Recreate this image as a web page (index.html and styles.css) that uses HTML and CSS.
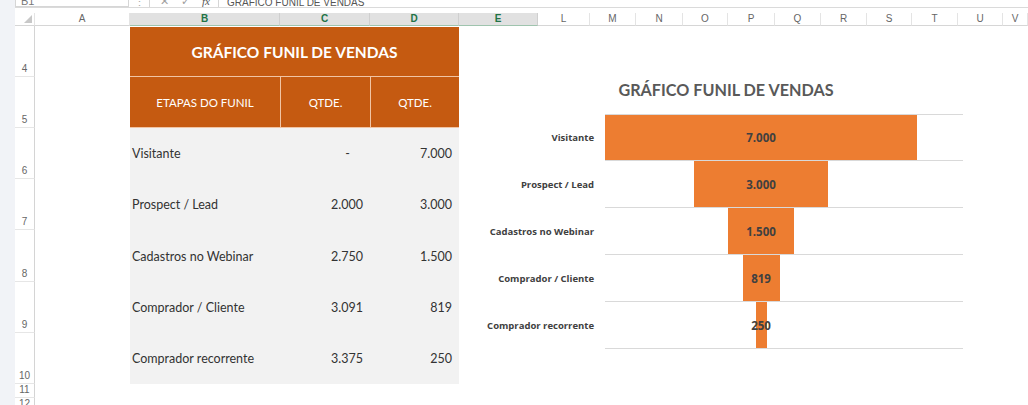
FILE: index.html
```html
<!DOCTYPE html>
<html lang="pt">
<head>
<meta charset="utf-8">
<title>Gráfico Funil de Vendas</title>
<link rel="stylesheet" href="styles.css">
</head>
<body>
<div class="app">
  <div class="strip"></div>
  <div class="main">
    <div class="fbar">
      <div class="namebox"><span>B1</span></div>
      <div class="dots">⋮</div>
      <div class="fbtns"><span>✕</span><span>✓</span><span class="fx">fx</span></div>
      <div class="finput"><span>GRÁFICO FUNIL DE VENDAS</span></div>
    </div>
    <div class="sheet">
      <div class="ch corner r0"><svg width="8" height="8" viewBox="0 0 8 8"><polygon points="8,0 8,8 0,8" fill="#c8c8c8"/></svg></div>
      <div class="ch r0">A</div>
      <div class="ch sel r0">B</div>
      <div class="ch sel r0">C</div>
      <div class="ch sel r0">D</div>
      <div class="ch sel r0">E</div>
      <div class="ch r0">L</div>
      <div class="ch r0">M</div>
      <div class="ch r0">N</div>
      <div class="ch r0">O</div>
      <div class="ch r0">P</div>
      <div class="ch r0">Q</div>
      <div class="ch r0">R</div>
      <div class="ch r0">S</div>
      <div class="ch r0">T</div>
      <div class="ch r0">U</div>
      <div class="ch r0">V</div>

      <div class="rh r4">4</div>
      <div class="rh r5">5</div>
      <div class="rh r6">6</div>
      <div class="rh r7">7</div>
      <div class="rh r8">8</div>
      <div class="rh r9">9</div>
      <div class="rh r10">10</div>
      <div class="rh r11">11</div>
      <div class="rh r12">12</div>

      <div class="title r4">GRÁFICO FUNIL DE VENDAS</div>
      <div class="th cB r5">ETAPAS DO FUNIL</div>
      <div class="th cC r5 bl">QTDE.</div>
      <div class="th cD r5 bl">QTDE.</div>

      <div class="td cB r6">Visitante</div>
      <div class="td cC r6 dash">-</div>
      <div class="td cD r6 num">7.000</div>

      <div class="td cB r7">Prospect / Lead</div>
      <div class="td cC r7 num">2.000</div>
      <div class="td cD r7 num">3.000</div>

      <div class="td cB r8">Cadastros no Webinar</div>
      <div class="td cC r8 num">2.750</div>
      <div class="td cD r8 num">1.500</div>

      <div class="td cB r9">Comprador / Cliente</div>
      <div class="td cC r9 num">3.091</div>
      <div class="td cD r9 num">819</div>

      <div class="td cB r10">Comprador recorrente</div>
      <div class="td cC r10 num">3.375</div>
      <div class="td cD r10 num">250</div>
    </div>
  </div>

  <div class="chart">
    <div class="ctitle">GRÁFICO FUNIL DE VENDAS</div>
    <div class="plot">
      <div class="prow first">
        <div class="plabel">Visitante</div>
        <div class="track"><div class="barzone"><div class="bar" style="width:312px"><span>7.000</span></div></div></div>
      </div>
      <div class="prow">
        <div class="plabel">Prospect / Lead</div>
        <div class="track"><div class="barzone"><div class="bar" style="width:134px"><span>3.000</span></div></div></div>
      </div>
      <div class="prow">
        <div class="plabel">Cadastros no Webinar</div>
        <div class="track"><div class="barzone"><div class="bar" style="width:66px"><span>1.500</span></div></div></div>
      </div>
      <div class="prow">
        <div class="plabel">Comprador / Cliente</div>
        <div class="track"><div class="barzone"><div class="bar" style="width:37px"><span>819</span></div></div></div>
      </div>
      <div class="prow">
        <div class="plabel">Comprador recorrente</div>
        <div class="track"><div class="barzone"><div class="bar" style="width:11px"><span>250</span></div></div></div>
      </div>
    </div>
  </div>
</div>
</body>
</html>
```

FILE: styles.css
```css
* { box-sizing: border-box; }
html, body { margin: 0; padding: 0; background: #fff; }
body { width: 1028px; height: 405px; overflow: hidden; font-family: "Lato", "Liberation Sans", sans-serif; }

.app { position: relative; display: flex; width: 1028px; height: 405px; overflow: hidden; }
.strip { width: 15px; flex: none; background: #f1f3f7; }
.main { flex: 1; display: flex; flex-direction: column; min-width: 0; }

/* formula bar (cut off at top) */
.fbar { flex: none; height: 8px; display: flex; align-items: flex-end; overflow: hidden; border-bottom: 1px solid #dadada; margin-bottom: 5px; font-family: "Liberation Sans", sans-serif; font-size: 11px; color: #777; }
.fbar span { display: block; line-height: 12px; margin-bottom: -2px; }
.namebox { width: 114px; height: 12px; flex: none; padding-left: 5px; border: 1px solid #d6d6d6; border-top: none; background: #fff; }
.dots { width: 20px; flex: none; text-align: center; color: #aaa; line-height: 10px; }
.fbtns { width: 70px; flex: none; display: flex; gap: 12px; padding-left: 10px; color: #a0a0a0; border-left: 1px solid #d6d6d6; border-right: 1px solid #d6d6d6; height: 12px; }
.fbtns .fx { font-style: italic; font-family: "Liberation Serif", serif; color: #555; }
.finput { flex: 1; padding-left: 8px; font-size: 10px; color: #555; }

/* sheet grid */
.sheet {
  flex: none;
  display: grid;
  grid-template-columns: 20px 95px 150px 90px 89px 79px 52px 46px 47px 45px 47px 46px 46px 45px 46px 45px 1fr;
  grid-template-rows: 13px 51px 51px 51px 51px 52px 51px 51px 14px 14px;
  font-family: "Lato", "Liberation Sans", sans-serif;
}
.r0 { grid-row: 1; }
.r4 { grid-row: 2; } .r5 { grid-row: 3; } .r6 { grid-row: 4; } .r7 { grid-row: 5; }
.r8 { grid-row: 6; } .r9 { grid-row: 7; } .r10 { grid-row: 8; } .r11 { grid-row: 9; } .r12 { grid-row: 10; }
.cB { grid-column: 3; } .cC { grid-column: 4; } .cD { grid-column: 5; }

.ch { font-family: "Liberation Sans", sans-serif; font-size: 10px; color: #666; text-align: center; line-height: 12px; background: #fff; border-right: 1px solid #e4e4e4; border-bottom: 1px solid #d6d6d6; }
.ch.sel { background: #e1e1e1; color: #217346; font-weight: bold; border-right-color: #cfcfcf; border-bottom: 1px solid #9fc4ae; }
.corner { display: flex; justify-content: flex-end; align-items: flex-end; padding: 0 2px 2px 0; }

.rh { grid-column: 1; font-family: "Liberation Sans", sans-serif; font-size: 10px; color: #666; text-align: center; display: flex; align-items: flex-end; justify-content: center; padding-bottom: 1px; line-height: 12px; background: #fff; border-right: 1px solid #d4d4d4; border-bottom: 1px solid #e6e6e6; }

.title { grid-column: 3 / 6; background: #c55a11; color: #fff; font-weight: bold; font-size: 15.5px; display: flex; align-items: center; justify-content: center; margin-top: 1px; border-bottom: 1px solid #f1c4a4; }
.th { background: #c55a11; color: #fff; font-size: 11.5px; display: flex; align-items: center; justify-content: center; border-bottom: 1px solid #f1c4a4; }
.th.bl { border-left: 1px solid #f1c4a4; }
.td { background: #f2f2f2; color: #333; font-size: 12.5px; display: flex; align-items: center; padding-left: 2px; }
.td.num { justify-content: flex-end; padding-right: 7px; }
.td.dash { justify-content: flex-end; padding-right: 20px; }

/* chart object floating over cells */
.chart { position: absolute; left: 470px; top: 70px; width: 512px; display: flex; flex-direction: column; font-family: "Open Sans", "Liberation Sans", sans-serif; }
.ctitle { height: 40px; line-height: 40px; text-align: center; font-family: "Lato", "Liberation Sans", sans-serif; font-weight: bold; font-size: 16.2px; color: #595959; margin-bottom: 4px; }
.plot { display: flex; flex-direction: column; }
.prow { display: flex; height: 47px; }
.plabel { width: 124px; flex: none; text-align: right; font-size: 9.5px; font-weight: bold; color: #404040; display: flex; align-items: center; justify-content: flex-end; }
.track { margin-left: 11px; width: 358px; flex: none; border-bottom: 1px solid #d9d9d9; display: flex; }
.prow.first .track { border-top: 1px solid #d9d9d9; }
.barzone { width: 312px; display: flex; justify-content: center; }
.bar { background: #ed7d31; display: flex; align-items: center; justify-content: center; overflow: visible; }
.bar span { font-size: 11.5px; font-weight: bold; color: #404040; white-space: nowrap; }
```
